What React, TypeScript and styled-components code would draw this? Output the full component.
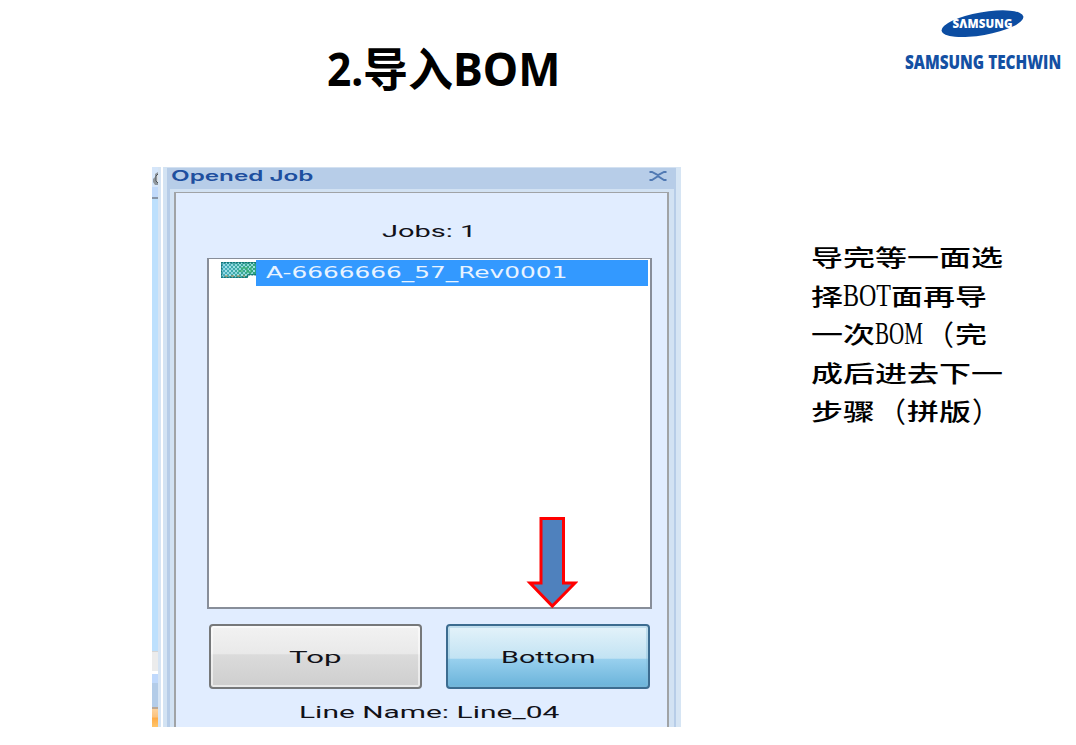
import React, { useLayoutEffect, useRef, useState } from 'react'
import styled, { createGlobalStyle } from 'styled-components'

// ==========================================
// 1. DATA
// ==========================================

type RunKind = 'cjk' | 'latin' | 'paren'

interface Run {
  kind: RunKind
  text: string
}

const NOTE_LINES: Run[][] = [
  [{ kind: 'cjk', text: '导完等一面选' }],
  [
    { kind: 'cjk', text: '择' },
    { kind: 'latin', text: 'BOT' },
    { kind: 'cjk', text: '面再导' }
  ],
  [
    { kind: 'cjk', text: '一次' },
    { kind: 'latin', text: 'BOM' },
    { kind: 'paren', text: '（' },
    { kind: 'cjk', text: '完' }
  ],
  [{ kind: 'cjk', text: '成后进去下一' }],
  [
    { kind: 'cjk', text: '步骤' },
    { kind: 'paren', text: '（' },
    { kind: 'cjk', text: '拼版' },
    { kind: 'paren', text: '）' }
  ]
]

// ==========================================
// 2. BASE
// ==========================================

const GlobalStyle = createGlobalStyle`
  * { box-sizing: border-box; }

  body {
    margin: 0;
    background: #ffffff;
    overflow: hidden;
  }
`

const FitBox = styled.span<{ $width: number }>`
  display: block;
  flex: none;
  width: ${(p) => p.$width}px;
  white-space: nowrap;
  text-align: left;

  > span {
    display: inline-block;
    transform-origin: 0 50%;
  }
`

// Stretches or squeezes a label so that it fills the given width
function FitText({ width, children }: { width: number; children: string }) {
  const ref = useRef<HTMLSpanElement>(null)
  const [scale, setScale] = useState(1)

  useLayoutEffect(() => {
    if (ref.current) setScale(width / ref.current.offsetWidth)
  }, [width, children])

  return (
    <FitBox $width={width}>
      <span ref={ref} style={{ transform: `scaleX(${scale})` }}>
        {children}
      </span>
    </FitBox>
  )
}

// ==========================================
// 3. SLIDE
// ==========================================

const Slide = styled.main`
  width: 1076px;
  height: 745px;
  display: flex;
  flex-direction: column;
  background: #ffffff;
`

const SlideHeader = styled.header`
  height: 167px;
  display: flex;
  justify-content: space-between;
  padding: 0 15px 0 327px;
`

const Title = styled.h1`
  display: flex;
  margin: 35px 0 0;
  height: 66px;
  line-height: 66px;
  font-family: 'Noto Sans', 'Noto Sans CJK SC', sans-serif;
  font-size: 46px;
  font-weight: 700;
  color: #000000;
`

const Brand = styled.div`
  width: 156px;
  display: flex;
  flex-direction: column;
  align-items: center;
  padding-top: 8px;

  svg { display: block; }
`

const BrandName = styled.div`
  margin-top: 10px;
  height: 24px;
  line-height: 24px;
  font-family: 'Open Sans', sans-serif;
  font-size: 19.5px;
  font-weight: 800;
  color: #1450a3;
`

const SlideBody = styled.div`
  display: flex;
  align-items: flex-start;
  padding-left: 152px;
`

// ==========================================
// 4. OPENED JOB WINDOW
// ==========================================

const Capture = styled.section`
  width: 529px;
  height: 560px;
  display: flex;
  flex: none;
  overflow: hidden;
  background: #d6e5f4;
`

const AppEdge = styled.div`
  width: 6px;
  display: flex;
  flex-direction: column;

  svg { display: block; }
`

const EdgeBlock = styled.div<{ $height: number; $fill: string }>`
  height: ${(p) => p.$height}px;
  flex: none;
  background: ${(p) => p.$fill};
`

const Gutter = styled.div`
  width: 9px;
  border-left: 3px solid #d6e4f3;
  background: linear-gradient(90deg, #ffffff 2px, #d3e3f3 2px);
`

const JobWindow = styled.div`
  width: 509px;
  display: flex;
  flex-direction: column;
  border-top: 1px solid #d3e1f1;
  background: #b7cde8;
`

const WindowBar = styled.div`
  height: 21px;
  flex: none;
  display: flex;
  align-items: center;
  justify-content: space-between;
  padding: 0 8px 5px 4px;
  font-family: Inter, 'Noto Sans', sans-serif;
  font-size: 14px;
  font-weight: 600;
  line-height: 16px;
  color: #1e4f9f;
`

const WindowFrame = styled.div`
  flex: 1;
  margin: 0 2px 0 3px;
  padding: 3px 5px 0 4px;
  background: #d2e2f3;
`

const JobPanel = styled.div`
  height: 536px;
  display: flex;
  flex-direction: column;
  border: solid #a0a3a6;
  border-width: 1px 2px 0;
  padding: 0 16px 0 31px;
  background: #e1edff;
  font-family: Roboto, 'Noto Sans', sans-serif;
  font-size: 16.5px;
  color: #111118;
`

const JobCount = styled.div`
  height: 65px;
  padding: 28px 0 0 175px;
  line-height: 22px;
`

const JobList = styled.div`
  position: relative;
  width: 445px;
  height: 351px;
  flex: none;
  border: 2px solid #888e99;
  border-top-width: 1px;
  background: #ffffff;
`

const JobRow = styled.div`
  display: flex;
  padding: 1px 2px 0 12px;

  svg { display: block; margin-top: 2px; flex: none; }
`

const JobName = styled.div`
  flex: 1;
  height: 26px;
  padding-left: 10px;
  background: #3399ff;
  color: #e8f3ff;
  font-family: 'DejaVu Sans', sans-serif;
  font-size: 15px;
  line-height: 27px;
`

const Pointer = styled.svg`
  position: absolute;
  left: 317px;
  top: 256px;
  z-index: 1;
`

const SideButtons = styled.div`
  display: flex;
  gap: 24px;
  padding: 15px 0 0 2px;
`

const SideButton = styled.button<{ $active?: boolean }>`
  display: flex;
  align-items: center;
  justify-content: center;
  width: ${(p) => (p.$active ? 204 : 213)}px;
  height: 65px;
  padding: 2px 0 0;
  border: 2px solid ${(p) => (p.$active ? '#3c6c90' : '#76787a')};
  border-radius: 4px;
  background: ${(p) =>
    p.$active
      ? 'linear-gradient(#e4f3fa 0%, #c2e3f3 53%, #98d0ee 54%, #6ab3da 100%)'
      : 'linear-gradient(#f2f2f2 0%, #e9e9e9 46%, #dbdbdb 47%, #cecece 100%)'};
  box-shadow: inset 0 0 0 2px ${(p) => (p.$active ? 'rgba(130, 185, 215, 0.35)' : 'rgba(255, 255, 255, 0.55)')};
  font: inherit;
  color: inherit;
`

const LineName = styled.div`
  padding: 13px 0 0 92px;
  line-height: 22px;
`

// ==========================================
// 5. SIDE NOTE
// ==========================================

const Note = styled.aside`
  display: flex;
  flex-direction: column;
  margin: 70px 0 0 130px;
  color: #000000;
`

const NoteLine = styled.div`
  display: flex;
  height: 38.5px;
  align-items: center;
`

const NoteRun = styled.span`
  display: block;
  flex: none;
  height: 38px;
  line-height: 38px;
  white-space: nowrap;
  font-family: 'Noto Sans CJK SC', sans-serif;
  font-size: 32px;
  font-weight: 500;
  transform: scaleY(0.7);
`

const NoteParen = styled.span<{ $opening: boolean }>`
  display: block;
  flex: none;
  width: 32px;
  height: 38px;
  padding: 1px 0 0 ${(p) => (p.$opening ? 3 : 1)}px;
  line-height: 38px;
  white-space: nowrap;
  font-family: 'Noto Sans CJK SC', sans-serif;
  font-size: 28px;
  font-weight: 400;
`

const NoteLatin = styled.span`
  height: 38px;
  line-height: 38px;
  font-family: 'Liberation Serif', serif;
  font-size: 32px;
`

// ==========================================
// 6. DRAWINGS
// ==========================================

function SamsungLogo() {
  return (
    <svg width="86" height="32" viewBox="0 0 86 32" aria-label="Samsung">
      <ellipse cx="42.5" cy="15.7" rx="41.5" ry="11.4" transform="rotate(-10 42.5 15.7)" fill="#0c4da2" />
      <text
        x="12.5"
        y="20"
        textLength="60"
        lengthAdjust="spacing"
        fontFamily="'Open Sans', sans-serif"
        fontSize="11.5"
        fontWeight="800"
        fill="#ffffff"
      >
        SΛMSUNG
      </text>
    </svg>
  )
}

function BoardIcon() {
  return (
    <svg width="35" height="17" viewBox="0 0 35 17">
      <defs>
        <pattern id="weave" width="4" height="4" patternUnits="userSpaceOnUse">
          <rect width="2" height="2" fill="#b5ecf4" />
          <rect x="2" y="2" width="2" height="2" fill="#a3e2ea" />
        </pattern>
        <linearGradient id="board">
          <stop offset="0" stopColor="#4aaec4" />
          <stop offset="1" stopColor="#2fa37b" />
        </linearGradient>
      </defs>
      <path d="M0 0H35V13H27V16H0Z" fill="url(#board)" />
      <path d="M1 1H34V12H26V15H1Z" fill="url(#weave)" opacity="0.8" />
      <path d="M35 .7H.7V15.3H26.5V12.8H35" fill="none" stroke="#147477" strokeWidth="1.4" strokeDasharray="2 1" />
      <path d="M4 14H24" stroke="#b98a4a" strokeDasharray="3 3" />
      <path d="M17 9h4v-3h5v4h4V5" fill="none" stroke="#39ad6c" strokeWidth="2" opacity="0.6" />
    </svg>
  )
}

// ==========================================
// 7. PAGE
// ==========================================

export default function App() {
  return (
    <>
      <GlobalStyle />
      <Slide>
        <SlideHeader>
          <Title>
            <FitText width={36}>2.</FitText>
            <FitText width={90}>导入</FitText>
            <FitText width={107}>BOM</FitText>
          </Title>
          <Brand>
            <SamsungLogo />
            <BrandName>
              <FitText width={156}>SAMSUNG TECHWIN</FitText>
            </BrandName>
          </Brand>
        </SlideHeader>

        <SlideBody>
          <Capture>
            <AppEdge>
              <svg width="6" height="32" viewBox="0 0 6 32">
                <rect width="6" height="32" fill="#d5e6fa" />
                <path d="M6 5L3 7V10L1 12V15L3 18H6Z" fill="#8f969c" />
                <path d="M6 7L4 9V14L6 16" fill="#d9dde0" stroke="#4b5258" />
                <rect y="20" width="6" height="10" fill="#c0d9fa" />
                <rect y="30" width="6" height="2" fill="#8795a8" />
              </svg>
              <EdgeBlock $height={452} $fill="#bde0fd" />
              <EdgeBlock $height={1} $fill="#d5d5d5" />
              <EdgeBlock $height={19} $fill="#ececec" />
              <EdgeBlock $height={3} $fill="#ffffff" />
              <EdgeBlock $height={9} $fill="#c0d9fc" />
              <EdgeBlock $height={24} $fill="#b3cce8" />
              <EdgeBlock $height={2} $fill="#bba895" />
              <EdgeBlock $height={18} $fill="linear-gradient(#fdd29c, #fbc27d 45%, #ffab45 50%, #ffc66c)" />
            </AppEdge>
            <Gutter />
            <JobWindow>
              <WindowBar>
                <FitText width={142}>Opened Job</FitText>
                <svg width="20" height="10" viewBox="0 0 20 10">
                  <path d="M1.5 1H4L10 4.2L16 1H18.5M1.5 9H4L10 5.2L16 9H18.5" fill="none" stroke="#5079b3" strokeWidth="1.9" />
                </svg>
              </WindowBar>
              <WindowFrame>
                <JobPanel>
                  <JobCount>
                    <FitText width={95}>Jobs: 1</FitText>
                  </JobCount>
                  <JobList>
                    <JobRow>
                      <BoardIcon />
                      <JobName>
                        <FitText width={301}>A-6666666_57_Rev0001</FitText>
                      </JobName>
                    </JobRow>
                    <Pointer width="52" height="94" viewBox="0 0 52 94">
                      <path
                        d="M15 3.5H37.5V68H49L26.3 91L4 68H15Z"
                        fill="#4f81bd"
                        stroke="#ff0000"
                        strokeWidth="3"
                      />
                    </Pointer>
                  </JobList>
                  <SideButtons>
                    <SideButton>
                      <FitText width={53}>Top</FitText>
                    </SideButton>
                    <SideButton $active>
                      <FitText width={94}>Bottom</FitText>
                    </SideButton>
                  </SideButtons>
                  <LineName>
                    <FitText width={261}>Line Name: Line_04</FitText>
                  </LineName>
                </JobPanel>
              </WindowFrame>
            </JobWindow>
          </Capture>

          <Note>
            {NOTE_LINES.map((line, i) => (
              <NoteLine key={i}>
                {line.map((run, j) => {
                  if (run.kind === 'latin') {
                    return (
                      <NoteLatin key={j}>
                        <FitText width={48}>{run.text}</FitText>
                      </NoteLatin>
                    )
                  }
                  if (run.kind === 'paren') {
                    return (
                      <NoteParen key={j} $opening={run.text === '（'}>
                        {run.text}
                      </NoteParen>
                    )
                  }
                  return <NoteRun key={j}>{run.text}</NoteRun>
                })}
              </NoteLine>
            ))}
          </Note>
        </SlideBody>
      </Slide>
    </>
  )
}
